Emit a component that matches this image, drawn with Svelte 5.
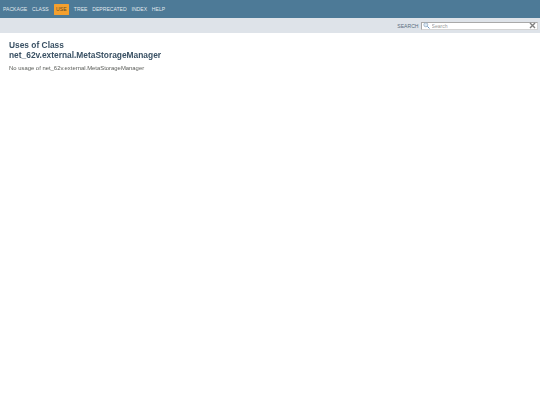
<script>
  const navItems = ['Package', 'Class', 'Use', 'Tree', 'Deprecated', 'Index', 'Help'];
</script>

<div class="page">
  <header class="header">
    <nav class="top-nav">
      <ul class="nav-list">
        {#each navItems as item}
          <li class:active={item === 'Use'}>{item}</li>
        {/each}
      </ul>
    </nav>
    <div class="sub-nav">
      <label class="search-label" for="search">Search</label>
      <div class="search-box">
        <svg class="glass" viewBox="0 0 8 8" width="7" height="7">
          <circle cx="3.2" cy="3.2" r="2.3" fill="#dbe9f5" stroke="#8fa8bd" stroke-width="0.8" />
          <path d="M5 5l2.4 2.4" stroke="#5f93c4" stroke-width="1.1" />
        </svg>
        <input id="search" placeholder="Search" />
        <svg class="clear" viewBox="0 0 7 7" width="7" height="7">
          <path d="M1 1l5 5M6 1l-5 5" stroke="#808080" stroke-width="1.4" />
        </svg>
      </div>
    </div>
  </header>

  <main class="content">
    <h1>Uses of Class<br />net_62v.external.MetaStorageManager</h1>
    <p>No usage of net_62v.external.MetaStorageManager</p>
  </main>
</div>

<style>
  :global(body) {
    margin: 0;
    background: #fff;
    font-family: "Liberation Sans", Arial, sans-serif;
  }

  .page {
    filter: blur(0.3px);
  }

  .top-nav {
    height: 18px;
    background: #4d7a97;
    display: flex;
    align-items: center;
  }

  .nav-list {
    display: flex;
    align-items: center;
    gap: 4.8px;
    list-style: none;
    margin: 0;
    padding: 0 0 0 3px;
    font-size: 5.1px;
    text-transform: uppercase;
    color: rgba(255, 255, 255, 0.85);
  }

  .nav-list li.active {
    background: #f4a02f;
    color: #5c4a2c;
    padding: 2.5px 2.5px;
    border-radius: 0.5px;
  }

  .sub-nav {
    box-sizing: border-box;
    height: 14.5px;
    padding: 1px 2px 0 0;
    background: #dee3e9;
    display: flex;
    justify-content: flex-end;
    align-items: center;
    gap: 2.5px;
  }

  .search-label {
    font-size: 5.1px;
    text-transform: uppercase;
    color: #5a6e7e;
  }

  .search-box {
    box-sizing: border-box;
    width: 117px;
    height: 8px;
    background: #fff;
    border: 1px solid #a9a9a9;
    border-bottom-color: #d4d4d4;
    border-right-color: #d4d4d4;
    display: flex;
    align-items: center;
    gap: 1.5px;
    padding: 0 1px;
  }

  .search-box input {
    flex: 1;
    min-width: 0;
    border: 0;
    padding: 0;
    outline: 0;
    font: 5.1px "Liberation Sans", Arial, sans-serif;
    background: transparent;
  }

  .search-box input::placeholder {
    color: #9a9a9a;
  }

  .content {
    padding: 7px 9px 0;
  }

  h1 {
    margin: 0;
    font-size: 8.4px;
    line-height: 10px;
    font-weight: bold;
    color: #3a5164;
  }

  p {
    margin: 5px 0 0;
    font-size: 5.9px;
    line-height: 7px;
    color: #5a5c58;
  }
</style>
